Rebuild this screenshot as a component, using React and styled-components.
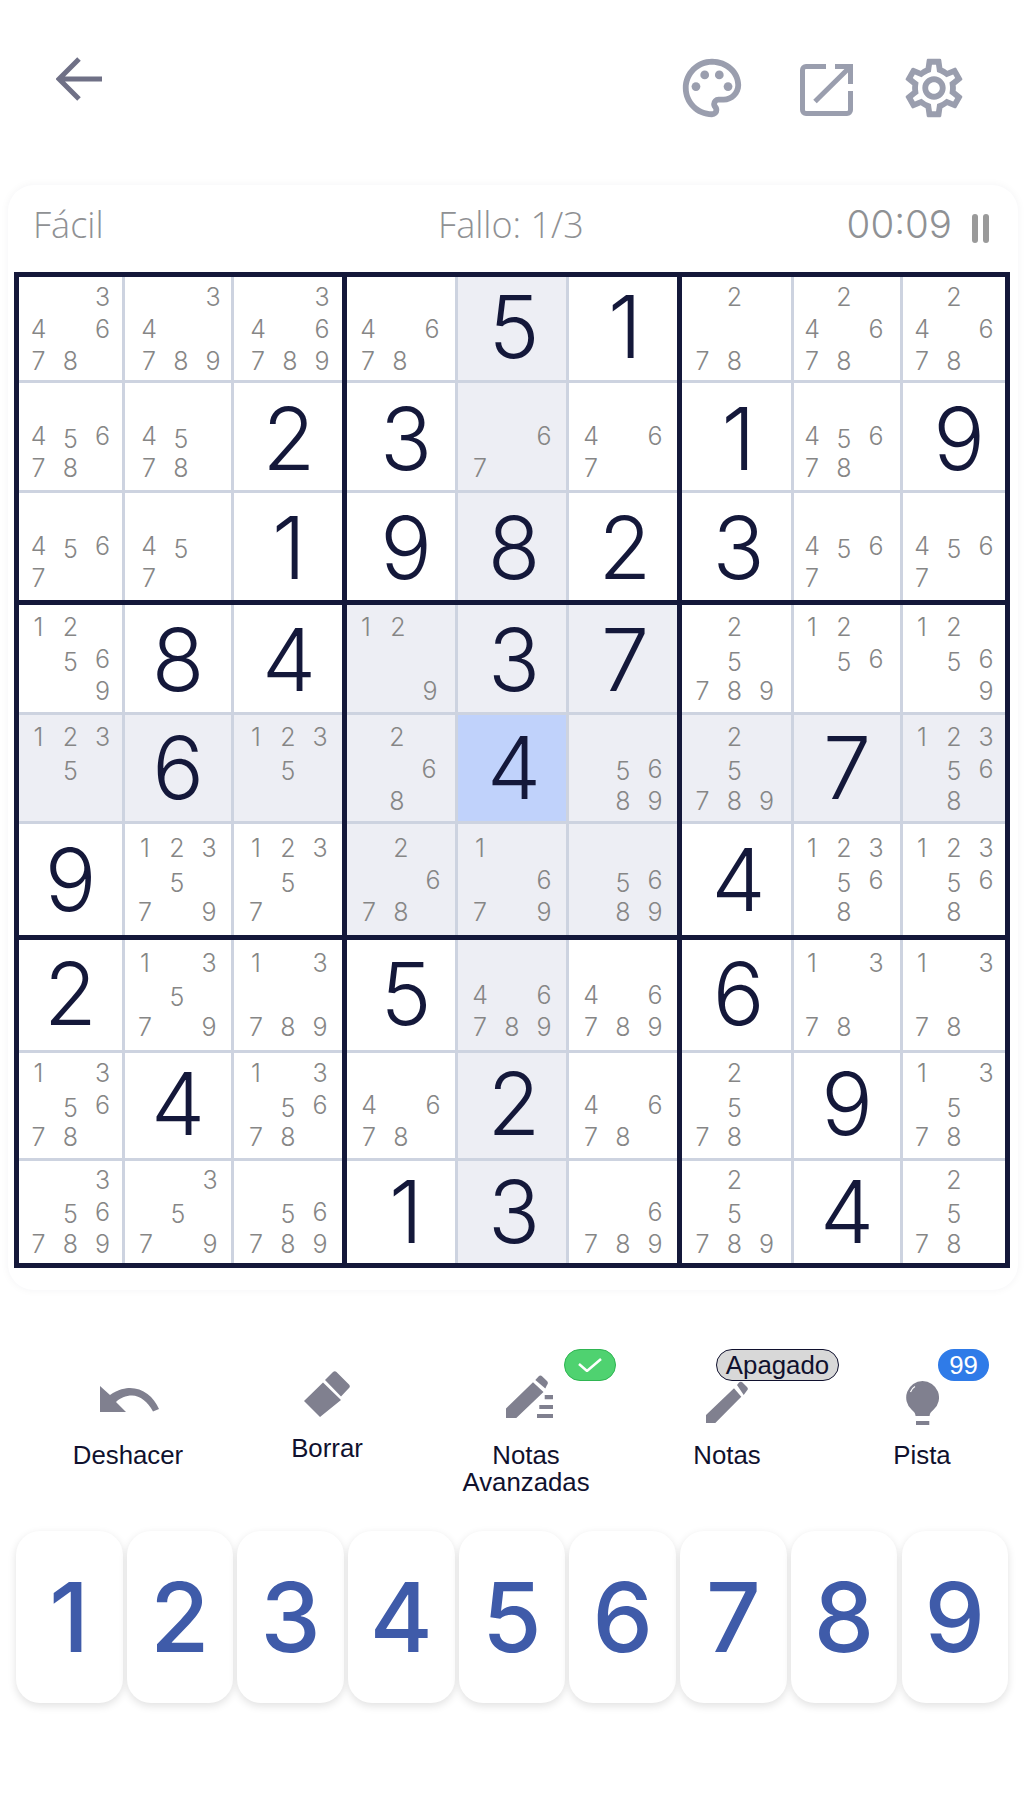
import React from "react";
import styled, { createGlobalStyle } from "styled-components";
import { MdOutlinePalette, MdOutlineSettings } from "react-icons/md";

const GlobalStyle = createGlobalStyle`
  html, body { margin: 0; padding: 0; background: #fff; }
  body { font-family: "Liberation Sans", Arial, sans-serif; }
`;

const n = (...digits) => digits;
const board = [
  [n(3,4,6,7,8), n(3,4,7,8,9), n(3,4,6,7,8,9), n(4,6,7,8), 5, 1, n(2,7,8), n(2,4,6,7,8), n(2,4,6,7,8)],
  [n(4,5,6,7,8), n(4,5,7,8), 2, 3, n(6,7), n(4,6,7), 1, n(4,5,6,7,8), 9],
  [n(4,5,6,7), n(4,5,7), 1, 9, 8, 2, 3, n(4,5,6,7), n(4,5,6,7)],
  [n(1,2,5,6,9), 8, 4, n(1,2,9), 3, 7, n(2,5,7,8,9), n(1,2,5,6), n(1,2,5,6,9)],
  [n(1,2,3,5), 6, n(1,2,3,5), n(2,6,8), 4, n(5,6,8,9), n(2,5,7,8,9), 7, n(1,2,3,5,6,8)],
  [9, n(1,2,3,5,7,9), n(1,2,3,5,7), n(2,6,7,8), n(1,6,7,9), n(5,6,8,9), 4, n(1,2,3,5,6,8), n(1,2,3,5,6,8)],
  [2, n(1,3,5,7,9), n(1,3,7,8,9), 5, n(4,6,7,8,9), n(4,6,7,8,9), 6, n(1,3,7,8), n(1,3,7,8)],
  [n(1,3,5,6,7,8), 4, n(1,3,5,6,7,8), n(4,6,7,8), 2, n(4,6,7,8), n(2,5,7,8), 9, n(1,3,5,7,8)],
  [n(3,5,6,7,8,9), n(3,5,7,9), n(5,6,7,8,9), 1, 3, n(6,7,8,9), n(2,5,7,8,9), 4, n(2,5,7,8)],
];

const colTracks = ["103px 106px 108px", "108px 108px 108px", "109px 106px 102px"];
const rowTracks = ["103px 107px 107px", "107px 106px 111px", "110px 105px 102px"];

// the digits do not sit dead centre in the original, nudges per column / row
const givenDx = [0, 0, 1, 5, 2, 2, 2, 0, 5];
const givenDy = [-2, 2, 1, 1, 0, 0, -1, -2, 0];
const noteDy = [1, 0, 0, 1, 1, 1, 0, 0, 0];
const noteDxByCol = [0, 0, 0, 0, 0, 0, -2, -3, 0];
const noteDxByCell = {
  "0,1": 3, "1,1": 3, "2,1": 3, "5,1": -1, "6,1": -1,
  "0,2": 2, "0,3": -1, "3,3": -3, "4,3": -4,
};

const Page = styled.div`
  width: 1024px;
  height: 1820px;
  overflow: hidden;
  background: #fff;
`;

const TopBar = styled.header`
  height: 185px;
  padding: 57px 55px 0 56px;
  box-sizing: border-box;
  display: flex;
  justify-content: space-between;
  align-items: flex-start;
`;

const TopIcons = styled.div`
  display: flex;
  align-items: center;
  margin-top: -4px;
  color: #9a9eae;
`;

const Spaced = styled.div`
  display: flex;
  margin: 0 46px -4px 53px;
`;

const Card = styled.section`
  margin: 0 6px 0 8px;
  height: 1105px;
  border-radius: 26px;
  background: #fff;
  box-shadow: 0 0 8px rgba(20, 24, 58, 0.05);
  padding: 0 6px;
  box-sizing: border-box;
`;

const StatusRow = styled.div`
  height: 87px;
  display: grid;
  grid-template-columns: 1fr 1fr 1fr;
  align-items: center;
  padding: 0 23px 9px 19px;
  box-sizing: border-box;
  font-family: "Open Sans", sans-serif;
  font-weight: 300;
  font-size: 36px;
  color: #8f9194;
`;

const Status = styled.span`
  text-align: ${(p) => p.$align || "left"};
`;

const Timer = styled.div`
  display: flex;
  justify-content: flex-end;
  align-items: center;
  gap: 20px;
  font-family: Inter, sans-serif;
  font-size: 38.5px;
`;

const Pause = styled.i`
  display: flex;
  justify-content: space-between;
  width: 17px;
  height: 29px;
  margin-top: 8px;
  &::before, &::after {
    content: "";
    width: 6px;
    border-radius: 3px;
    background: #9a9a9a;
  }
`;

const Board = styled.div`
  width: 996px;
  box-sizing: border-box;
  border: 5px solid #14183a;
  background: #14183a;
  display: grid;
  grid-template-columns: 323px 330px 323px;
  grid-template-rows: 323px 330px 323px;
  gap: 5px;
`;

const Box = styled.div`
  display: grid;
  grid-template-columns: ${(p) => p.$cols};
  grid-template-rows: ${(p) => p.$rows};
  gap: 3px;
  background: #cdd3e0;
`;

const Cell = styled.div`
  display: flex;
  align-items: center;
  justify-content: center;
  background: ${(p) =>
    p.$tone === "selected" ? "#c0d2fb" : p.$tone === "peer" ? "#edeef4" : "#fff"};
`;

const Given = styled.span`
  margin: ${(p) => p.$dy * 2}px 0 0 ${(p) => p.$dx * 2}px;
  font-family: Inter, sans-serif;
  font-weight: 280;
  font-size: 86px;
  line-height: 1;
  color: #14183a;
`;

const Notes = styled.div`
  margin: ${(p) => p.$dy * 2}px 0 0 ${(p) => p.$dx * 2}px;
  display: grid;
  grid-template-columns: repeat(3, 32px);
  grid-template-rows: repeat(3, 32px);
  place-items: center;
`;

const Note = styled.span`
  grid-column: ${(p) => ((p.$digit - 1) % 3) + 1};
  grid-row: ${(p) => Math.floor((p.$digit - 1) / 3) + 1};
  margin-top: ${(p) => (p.$digit === 5 ? 5 : 0)}px;
  font-family: Inter, sans-serif;
  font-weight: 300;
  font-size: 25px;
  line-height: 1;
  color: #868686;
`;

const Tools = styled.div`
  margin-top: 56px;
  height: 185px;
  padding-left: 28.5px;
  display: grid;
  grid-template-columns: 199px 199px 199px 203px 187px;
  align-items: start;
`;

const Tool = styled.div`
  position: relative;
  display: flex;
  flex-direction: column;
  align-items: center;
  text-align: center;
  font-size: 25.8px;
  line-height: 27px;
  color: #10112e;
`;

const ToolIcon = styled.div`
  height: ${(p) => p.$height || 96}px;
  width: 100%;
  display: flex;
  justify-content: center;
  color: #80808f;
  svg {
    display: block;
    margin-top: ${(p) => p.$top || 0}px;
    margin-left: ${(p) => p.$shift || 0}px;
  }
`;

const Pill = styled.span`
  position: absolute;
  top: 3px;
  left: ${(p) => p.$left}px;
  box-sizing: border-box;
  height: 32px;
  width: ${(p) => p.$width}px;
  border-radius: 17px;
  display: flex;
  align-items: center;
  justify-content: center;
  font-size: 25.8px;
  background: ${(p) => p.$bg};
  border: ${(p) => (p.$border ? `1.5px solid ${p.$border}` : "none")};
  color: ${(p) => p.$color};
`;

const Keypad = styled.div`
  margin: 0 16px;
  display: grid;
  grid-template-columns: repeat(9, 106.5px);
  gap: 4.2px;
`;

const Key = styled.div`
  height: 172px;
  border-radius: 24px;
  background: #fff;
  box-shadow: 0 3px 8px rgba(0, 0, 0, 0.12);
  display: flex;
  align-items: center;
  justify-content: center;
  font-family: Inter, sans-serif;
  font-weight: 470;
  font-size: 96px;
  line-height: 1;
  color: #3f5ba9;
`;

function BackArrow() {
  return (
    <svg width="46" height="44" viewBox="0 0 46 44" fill="none" stroke="#6f7086" strokeWidth="5">
      <path d="M23 2 3 22l20 20M3 22h43" />
    </svg>
  );
}

function ExportIcon() {
  return (
    <svg width="53" height="52" viewBox="0 0 53 52" fill="none" stroke="currentColor" strokeWidth="5">
      <path d="M26 2.500H6A3.500 3.500 0 0 0 2.500 6v40A3.500 3.500 0 0 0 6 49.500h41a3.500 3.500 0 0 0 3.500-3.500V27" />
      <path d="M35 2.500h15.500V20M50.500 2.500 15 37.500" />
    </svg>
  );
}

function UndoIcon() {
  return (
    <svg width="59" height="26" viewBox="0 0 59 26" fill="currentColor">
      <path d="M0 0V26H26L16 16C20 12 26 9.500 32 9.500C40 9.500 48 16 53 25.500L59 23C54 11 43 2 30 2C26 2 18 3 10 9Z" />
    </svg>
  );
}

function EraserIcon() {
  return (
    <svg width="46" height="46" viewBox="0 0 46 46" fill="currentColor">
      <path d="M0 30 19 11.500 37 29 16 46zM21 9l8-8a2.500 2.500 0 0 1 3.500 0L45 13.500a2.500 2.500 0 0 1 0 3.500l-8 8.500z" />
    </svg>
  );
}

function PencilIcon() {
  return (
    <svg width="42" height="42" viewBox="0 0 42 42" fill="currentColor">
      <path d="M0 42V34L28 7.300 35.300 15.700 9.300 42zM31 4l2-2.500a2.500 2.500 0 0 1 3.500 0L41 6a2.500 2.500 0 0 1 0 3.500L37.700 14z" />
    </svg>
  );
}

function PencilLinesIcon() {
  return (
    <svg width="47" height="43" viewBox="0 0 47 43" fill="currentColor">
      <path d="M0 43V33.500L27 7.300 37.500 17 10.300 43zM29.300 5l3.200-3.500a2.800 2.800 0 0 1 3.800 0L41 6a3 3 0 0 1 0 4L39.300 13.500z" />
      <path d="M38.700 20H47v4.300h-8.300zM33.300 30H47v4H33.300zM31 39h16v4H31z" />
    </svg>
  );
}

function BulbIcon() {
  return (
    <svg width="33" height="44" viewBox="0 0 33 44" fill="currentColor">
      <path d="M16.500 0a16.500 16.500 0 0 1 11 28.800c-3 2.700-3.500 3.500-3.900 6.200H9.600c-.4-2.700-.9-3.500-3.900-6.200A16.500 16.500 0 0 1 16.500 0z" />
      <path d="M10 40h13.300v4H10z" />
      <path d="M4.500 11c.8-2.500 2.200-4.200 4.500-5.500" stroke="#fff" strokeWidth="1.200" fill="none" />
    </svg>
  );
}

function CheckMark() {
  return (
    <svg width="24" height="14" viewBox="0 0 24 14" fill="none" stroke="#fff" strokeWidth="2.500">
      <path d="M1 6l8 7L23 1" />
    </svg>
  );
}

const toneFor = (r, c) => {
  if (r === 4 && c === 4) return "selected";
  if (r === 4 || c === 4 || (r >= 3 && r <= 5 && c >= 3 && c <= 5)) return "peer";
  return "plain";
};

function SudokuCell({ value, r, c }) {
  const noteDx = noteDxByCell[`${r},${c}`] ?? noteDxByCol[c];
  return (
    <Cell $tone={toneFor(r, c)}>
      {Array.isArray(value) ? (
        <Notes $dx={noteDx} $dy={noteDy[r]}>
          {value.map((d) => (
            <Note key={d} $digit={d}>{d}</Note>
          ))}
        </Notes>
      ) : (
        <Given $dx={givenDx[c]} $dy={givenDy[r]}>{value}</Given>
      )}
    </Cell>
  );
}

export default function App() {
  const boxes = [];
  for (let br = 0; br < 3; br++) {
    for (let bc = 0; bc < 3; bc++) {
      const cells = [];
      for (let r = br * 3; r < br * 3 + 3; r++) {
        for (let c = bc * 3; c < bc * 3 + 3; c++) {
          cells.push(<SudokuCell key={`${r}-${c}`} value={board[r][c]} r={r} c={c} />);
        }
      }
      boxes.push(
        <Box key={`${br}-${bc}`} $cols={colTracks[bc]} $rows={rowTracks[br]}>
          {cells}
        </Box>
      );
    }
  }

  return (
    <Page>
      <GlobalStyle />
      <TopBar>
        <BackArrow />
        <TopIcons>
          <MdOutlinePalette size={70} />
          <Spaced><ExportIcon /></Spaced>
          <MdOutlineSettings size={70} />
        </TopIcons>
      </TopBar>
      <Card>
        <StatusRow>
          <Status>Fácil</Status>
          <Status $align="center">Fallo: 1/3</Status>
          <Timer>
            <span>00:09</span>
            <Pause />
          </Timer>
        </StatusRow>
        <Board>{boxes}</Board>
      </Card>
      <Tools>
        <Tool>
          <ToolIcon $top={40} $shift={2}><UndoIcon /></ToolIcon>
          Deshacer
        </Tool>
        <Tool>
          <ToolIcon $height={89} $top={25}><EraserIcon /></ToolIcon>
          Borrar
        </Tool>
        <Tool>
          <ToolIcon $top={29} $shift={6}><PencilLinesIcon /></ToolIcon>
          Notas<br />Avanzadas
          <Pill $left={137} $width={52} $bg="#4fd270" $border="#2fb552" $color="#fff"><CheckMark /></Pill>
        </Tool>
        <Tool>
          <ToolIcon $top={35}><PencilIcon /></ToolIcon>
          Notas
          <Pill $left={90.5} $width={123} $bg="#d8d8d8" $border="#10112e" $color="#10112e">Apagado</Pill>
        </Tool>
        <Tool>
          <ToolIcon $top={35}><BulbIcon /></ToolIcon>
          Pista
          <Pill $left={109.5} $width={51} $bg="#2f7be8" $color="#fff">99</Pill>
        </Tool>
      </Tools>
      <Keypad>
        {[1, 2, 3, 4, 5, 6, 7, 8, 9].map((d) => (
          <Key key={d}>{d}</Key>
        ))}
      </Keypad>
    </Page>
  );
}
